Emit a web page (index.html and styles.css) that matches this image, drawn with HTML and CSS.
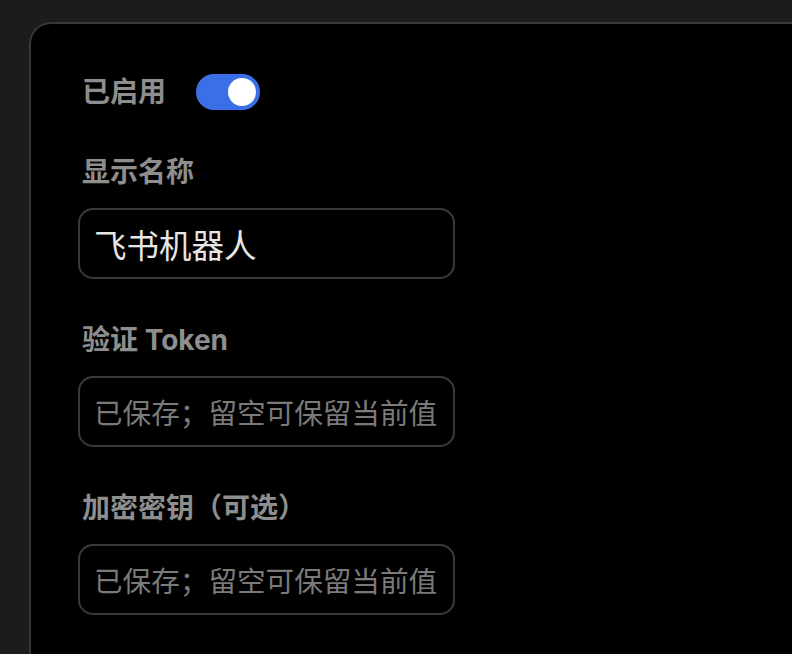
FILE: index.html
```html
<!DOCTYPE html>
<html lang="zh-CN">
<head>
<meta charset="utf-8">
<title>飞书机器人</title>
<link rel="stylesheet" href="styles.css">
</head>
<body>
<div class="page">
  <section class="card">
    <div class="toggle-row">
      <span class="label">已启用</span>
      <span class="switch" role="switch" aria-checked="true"><span class="knob"></span></span>
    </div>
    <div class="field">
      <label class="label">显示名称</label>
      <input class="input value" type="text" value="飞书机器人">
    </div>
    <div class="field">
      <label class="label">验证 Token</label>
      <input class="input secret" type="password" placeholder="已保存；留空可保留当前值">
    </div>
    <div class="field">
      <label class="label">加密密钥（可选）</label>
      <input class="input secret" type="password" placeholder="已保存；留空可保留当前值">
    </div>
  </section>
</div>
</body>
</html>
```

FILE: styles.css
```css
html, body {
  margin: 0;
  padding: 0;
  background: #1c1c1f;
  overflow: hidden;
  height: 100%;
}

.page {
  box-sizing: border-box;
  height: 100vh;
  padding: 22px 0 0 29px;
  display: flex;
  font-family: "Inter", "Noto Sans CJK SC", sans-serif;
}

.card {
  flex: 1;
  box-sizing: border-box;
  background: #000;
  border: 2px solid #38383b;
  border-right: none;
  border-bottom: none;
  border-radius: 22px 0 0 0;
  padding: 50px 0 0 47px;
  display: flex;
  flex-direction: column;
  gap: 41px;
}

.toggle-row {
  display: flex;
  align-items: center;
  gap: 30px;
  height: 36px;
  padding-bottom: 1px;
}

.label {
  display: block;
  margin-left: 4px;
  font-size: 28px;
  line-height: 40px;
  font-weight: 700;
  color: #8e8e8e;
  font-family: "Inter", "Noto Sans CJK SC", sans-serif;
}

.toggle-row .label {
  display: inline-block;
}

.switch {
  width: 64px;
  height: 36px;
  border-radius: 18px;
  background: #3c6fe7;
  display: flex;
  align-items: center;
  justify-content: flex-end;
  padding: 0 4px;
  box-sizing: border-box;
}

.knob {
  width: 28px;
  height: 28px;
  border-radius: 50%;
  background: #fff;
}

.field {
  display: flex;
  flex-direction: column;
  gap: 16px;
}

.input {
  width: 377px;
  height: 71px;
  box-sizing: border-box;
  background: #000;
  border: 2px solid #3a3a3c;
  border-radius: 15px;
  padding: 0 14px;
  outline: none;
  font-family: "Noto Sans CJK SC", sans-serif;
  color: #e6e6e6;
}

.input.value {
  font-size: 32.5px;
}

.input.secret {
  font-size: 28.6px;
}

.input::placeholder {
  color: #7a7a7a;
  opacity: 1;
}
```
